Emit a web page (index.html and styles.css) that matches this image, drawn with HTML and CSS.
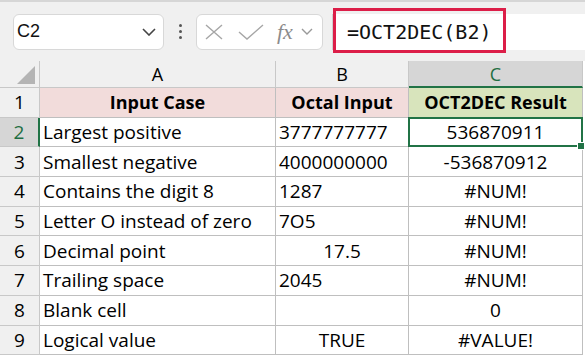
FILE: index.html
```html
<!DOCTYPE html>
<html lang="en">

<head>
    <meta charset="UTF-8">
    <meta name="viewport" content="width=device-width, initial-scale=1.0">
    <title>OCT2DEC</title>
    <link rel="stylesheet" href="styles.css">
</head>

<body>
    <div class="toolbar">
        <div class="name-box">
            <span>C2</span>
            <svg class="chev" width="14" height="8" viewBox="0 0 14 8"><path d="M1 1 L7 7 L13 1" fill="none" stroke="#444" stroke-width="1.6"/></svg>
        </div>
        <div class="dots"><i></i><i></i><i></i></div>
        <div class="fx-box">
            <svg width="18" height="16" viewBox="0 0 18 16"><path d="M1 1 L17 15 M17 1 L1 15" stroke="#a6a6a6" stroke-width="1.4" fill="none"/></svg>
            <svg class="tick" width="26" height="16" viewBox="0 0 26 16"><path d="M1 8 L9 15 L25 1" stroke="#a6a6a6" stroke-width="1.4" fill="none"/></svg>
            <span class="fx">fx</span>
            <svg width="12" height="7" viewBox="0 0 12 7"><path d="M1 1 L6 6 L11 1" fill="none" stroke="#999" stroke-width="1.4"/></svg>
        </div>
        <div class="formula">
            <span>=OCT2DEC(B2)</span>
            <div class="mark"></div>
        </div>
    </div>

    <div class="sheet">
        <div class="corner"><span></span></div>
        <div class="col">A</div>
        <div class="col">B</div>
        <div class="col active">C</div>

        <div class="row">1</div>
        <div class="cell head pink center">Input Case</div>
        <div class="cell head pink center">Octal Input</div>
        <div class="cell head green center">OCT2DEC Result</div>

        <div class="row active">2</div>
        <div class="cell">Largest positive</div>
        <div class="cell">3777777777</div>
        <div class="cell center selected">536870911<span class="handle"></span></div>

        <div class="row">3</div>
        <div class="cell">Smallest negative</div>
        <div class="cell">4000000000</div>
        <div class="cell center">-536870912</div>

        <div class="row">4</div>
        <div class="cell">Contains the digit 8</div>
        <div class="cell">1287</div>
        <div class="cell center">#NUM!</div>

        <div class="row">5</div>
        <div class="cell">Letter O instead of zero</div>
        <div class="cell">7O5</div>
        <div class="cell center">#NUM!</div>

        <div class="row">6</div>
        <div class="cell">Decimal point</div>
        <div class="cell center">17.5</div>
        <div class="cell center">#NUM!</div>

        <div class="row">7</div>
        <div class="cell">Trailing space</div>
        <div class="cell">2045</div>
        <div class="cell center">#NUM!</div>

        <div class="row">8</div>
        <div class="cell">Blank cell</div>
        <div class="cell"></div>
        <div class="cell center">0</div>

        <div class="row">9</div>
        <div class="cell">Logical value</div>
        <div class="cell center">TRUE</div>
        <div class="cell center">#VALUE!</div>
    </div>
</body>

</html>
```

FILE: styles.css
```css
* {
    padding: 0;
    margin: 0;
    box-sizing: border-box;
}

body {
    width: 585px;
    height: 357px;
    overflow: hidden;
    background: #fff;
    font-family: "Open Sans", "Liberation Sans", sans-serif;
}

/* formula bar */
.toolbar {
    display: flex;
    align-items: center;
    height: 61px;
    padding-left: 13px;
    background: #f0f0f0;
    border-top: 2px solid #d6d6d6;
}

.name-box {
    display: flex;
    align-items: center;
    justify-content: space-between;
    width: 151px;
    height: 36px;
    padding: 0 7px 0 3px;
    background: #fff;
    border: 1px solid #d8d8d8;
    border-radius: 6px;
    font-family: "Liberation Sans", Arial, sans-serif;
    font-size: 18px;
    color: #111;
}

.dots {
    display: flex;
    flex-direction: column;
    align-items: center;
    gap: 3px;
    width: 32px;
}

.dots i {
    width: 3px;
    height: 3px;
    background: #555;
    border-radius: 50%;
}

.fx-box {
    display: flex;
    align-items: center;
    width: 127px;
    height: 36px;
    padding-left: 8px;
    background: #fff;
    border: 1px solid #d8d8d8;
    border-radius: 6px;
}

.fx-box .tick {
    margin-left: 15px;
}

.fx {
    margin: 0 8px 0 13px;
    font-family: "Liberation Serif", serif;
    font-style: italic;
    font-size: 22px;
    color: #8c8c8c;
}

.formula {
    position: relative;
    flex: 1;
    display: flex;
    align-items: center;
    height: 36px;
    margin-left: 9px;
    padding-left: 14px;
    background: #fff;
    border-left: 1px solid #cfcfcf;
    font-family: "DejaVu Sans Mono", monospace;
    font-size: 20px;
    color: #111;
}

.formula .mark {
    position: absolute;
    left: 0;
    top: -6px;
    width: 173px;
    height: 45px;
    border: 3px solid #dc1e48;
}

/* grid */
.sheet {
    display: grid;
    grid-template-columns: 40px 236px 133px 174px;
    grid-template-rows: 27px repeat(9, 29.7px);
    font-size: 19px;
    color: #000;
}

.corner {
    position: relative;
    background: #f0f0f0;
    border-right: 1px solid #c8c8c8;
    border-bottom: 1px solid #c8c8c8;
}

.corner span {
    position: absolute;
    right: 4px;
    bottom: 3px;
    width: 0;
    height: 0;
    border-left: 18px solid transparent;
    border-bottom: 18px solid #b4b4b4;
}

.col {
    display: flex;
    align-items: center;
    justify-content: center;
    background: #f0f0f0;
    border-right: 1px solid #c8c8c8;
    border-bottom: 1px solid #c8c8c8;
    font-size: 18px;
}

.col.active {
    background: #d6d6d6;
    color: #1e6e42;
    border-bottom: 2px solid #217346;
}

.row {
    display: flex;
    align-items: center;
    justify-content: center;
    background: #f0f0f0;
    border-right: 1px solid #c8c8c8;
    border-bottom: 1px solid #c8c8c8;
}

.row.active {
    background: #d6d6d6;
    color: #1e6e42;
    border-right: 2px solid #217346;
}

.cell {
    position: relative;
    display: flex;
    align-items: center;
    padding-left: 3px;
    white-space: nowrap;
    border-right: 1px solid #bfbfbf;
    border-bottom: 1px solid #bfbfbf;
}

.center {
    justify-content: center;
    padding-left: 0;
}

.head {
    font-weight: bold;
    font-size: 18px;
}

.pink {
    background: #f2dcdb;
}

.green {
    background: #d8e4bc;
}

.selected {
    z-index: 2;
    border: 2px solid #217346;
    margin: -1px 0 0 -1px;
}

.handle {
    position: absolute;
    right: -4px;
    bottom: -5px;
    width: 8px;
    height: 8px;
    background: #217346;
    border: 1px solid #fff;
}
```
